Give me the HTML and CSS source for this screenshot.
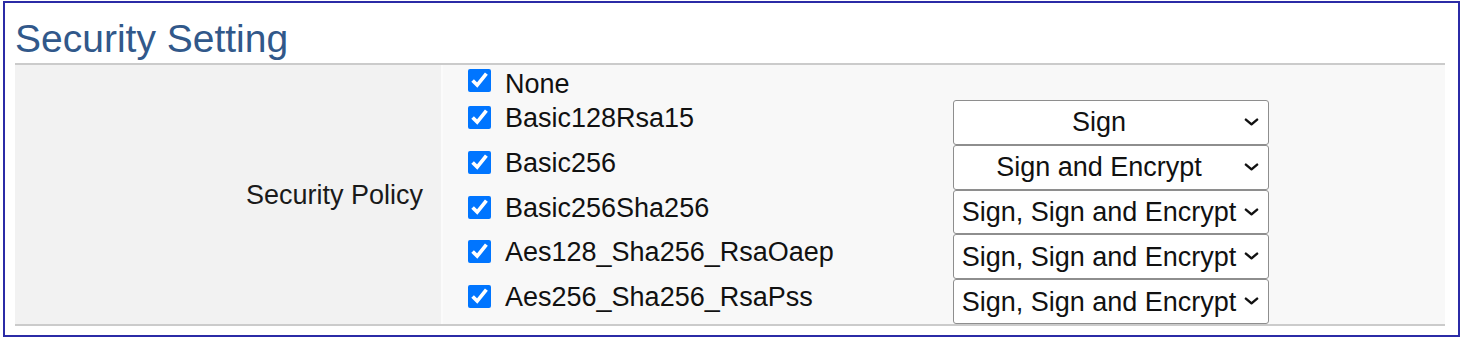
FILE: index.html
```html
<!DOCTYPE html>
<html>

<head>
  <meta charset="UTF-8">
  <title>Security Setting</title>
  <link rel="stylesheet" href="styles.css">
</head>

<body>
  <div class="frame">
    <h2 class="title">Security Setting</h2>
    <div class="policy">
      <div class="label">Security Policy</div>
      <div class="options">
        <div class="opt opt-none">
          <label><input type="checkbox" checked> None</label>
        </div>
        <div class="opt">
          <label><input type="checkbox" checked> Basic128Rsa15</label>
          <div class="pick">
            <select>
              <option>Sign</option>
            </select>
            <svg class="arrow" viewBox="0 0 16 8"><path d="M2 1.5 L8 6.5 L14 1.5" /></svg>
          </div>
        </div>
        <div class="opt">
          <label><input type="checkbox" checked> Basic256</label>
          <div class="pick">
            <select>
              <option>Sign and Encrypt</option>
            </select>
            <svg class="arrow" viewBox="0 0 16 8"><path d="M2 1.5 L8 6.5 L14 1.5" /></svg>
          </div>
        </div>
        <div class="opt">
          <label><input type="checkbox" checked> Basic256Sha256</label>
          <div class="pick">
            <select>
              <option>Sign, Sign and Encrypt</option>
            </select>
            <svg class="arrow" viewBox="0 0 16 8"><path d="M2 1.5 L8 6.5 L14 1.5" /></svg>
          </div>
        </div>
        <div class="opt">
          <label><input type="checkbox" checked> Aes128_Sha256_RsaOaep</label>
          <div class="pick">
            <select>
              <option>Sign, Sign and Encrypt</option>
            </select>
            <svg class="arrow" viewBox="0 0 16 8"><path d="M2 1.5 L8 6.5 L14 1.5" /></svg>
          </div>
        </div>
        <div class="opt">
          <label><input type="checkbox" checked> Aes256_Sha256_RsaPss</label>
          <div class="pick">
            <select>
              <option>Sign, Sign and Encrypt</option>
            </select>
            <svg class="arrow" viewBox="0 0 16 8"><path d="M2 1.5 L8 6.5 L14 1.5" /></svg>
          </div>
        </div>
      </div>
    </div>
  </div>
</body>

</html>
```

FILE: styles.css
```css
* {
  box-sizing: border-box;
}

body {
  margin: 0;
  font-family: "Liberation Sans", Arial, sans-serif;
  background: #fff;
}

.frame {
  width: 1457px;
  height: 336px;
  margin: 1px 0 0 3px;
  border: 2px solid #2b2ba6;
  padding: 0 13px 0 10px;
}

.title {
  margin: 14px 0 0 0;
  padding-bottom: 2px;
  font-size: 39px;
  font-weight: normal;
  color: #31588a;
  border-bottom: 2px solid #cbcbcb;
}

.policy {
  display: grid;
  grid-template-columns: 428px 1fr;
  border-bottom: 2px solid #cbcbcb;
  height: 261px;
}

.label {
  background: #f2f2f2;
  display: flex;
  align-items: center;
  justify-content: flex-end;
  padding-right: 18px;
  padding-top: 2px;
  font-size: 27px;
  color: #1a1a1a;
  border-right: 2px solid #fbfbfb;
}

.options {
  background: #f8f8f8;
  padding: 1px 0 0 25px;
}

.opt {
  display: flex;
  height: 44.8px;
}

.opt-none {
  height: 34px;
}

.opt label {
  width: 485px;
  display: flex;
  align-items: flex-start;
  gap: 14px;
  font-size: 27px;
  line-height: 36px;
  color: #111;
}

.opt input {
  width: 23px;
  height: 23px;
  margin: 6px 0 0 0;
  accent-color: #0075ff;
}

.opt-none input {
  margin-top: 3px;
}

.pick {
  position: relative;
  width: 316px;
  height: 44.8px;
}

.pick select {
  appearance: none;
  width: 100%;
  height: 100%;
  margin: 0;
  padding: 0 31px 0 7px;
  font-family: "Liberation Sans", Arial, sans-serif;
  font-size: 27px;
  color: #111;
  background: #fff;
  border: 1px solid #8e8e8e;
  border-radius: 3px;
  text-align-last: center;
}

.arrow {
  position: absolute;
  right: 10px;
  top: 18px;
  width: 15px;
  height: 8px;
  fill: none;
  stroke: #111;
  stroke-width: 2.6;
  stroke-linecap: round;
  stroke-linejoin: round;
  pointer-events: none;
}
```
